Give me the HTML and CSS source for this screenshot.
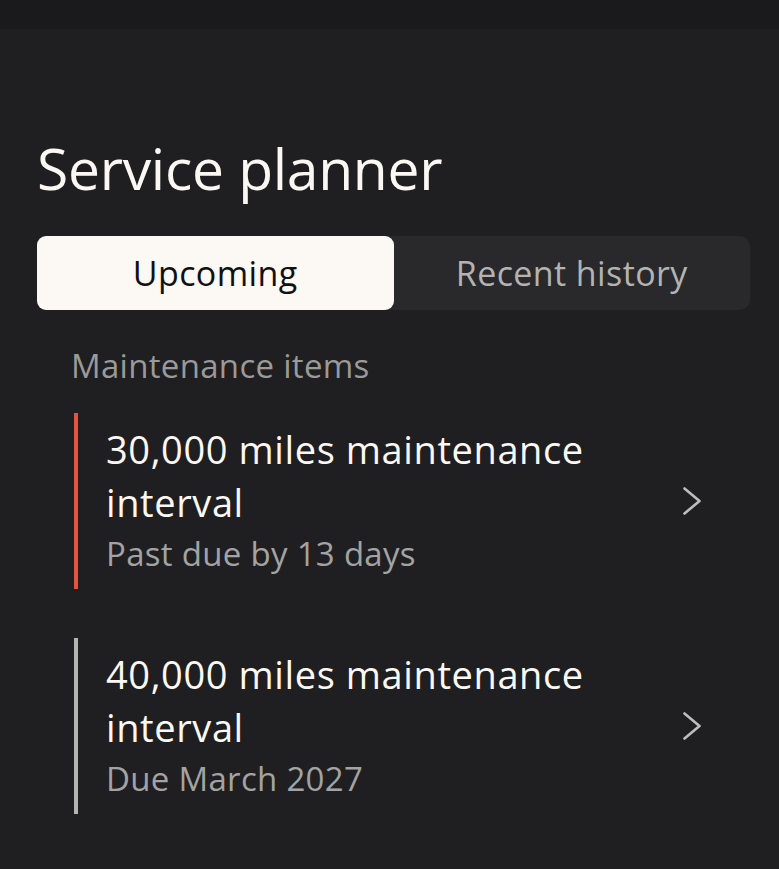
FILE: index.html
```html
<!DOCTYPE html>
<html lang="en">
<head>
<meta charset="utf-8">
<title>Service planner</title>
<link rel="stylesheet" href="styles.css">
</head>
<body>
<div class="statusbar"></div>
<main class="page">
  <h1 class="title">Service planner</h1>
  <div class="tabs">
    <div class="tab tab-active">Upcoming</div>
    <div class="tab">Recent history</div>
  </div>
  <section class="section">
    <h2 class="section-label">Maintenance items</h2>
    <div class="item item-overdue">
      <div class="item-text">
        <div class="item-title">30,000 miles maintenance interval</div>
        <div class="item-sub">Past due by 13 days</div>
      </div>
      <svg class="chev" viewBox="0 0 18 28" width="18" height="28"><path d="M1.5 1.5 L16.5 14 L1.5 26.5" fill="none" stroke="#bdbdbd" stroke-width="2.6" stroke-linecap="round" stroke-linejoin="round"/></svg>
    </div>
    <div class="item">
      <div class="item-text">
        <div class="item-title">40,000 miles maintenance interval</div>
        <div class="item-sub">Due March 2027</div>
      </div>
      <svg class="chev" viewBox="0 0 18 28" width="18" height="28"><path d="M1.5 1.5 L16.5 14 L1.5 26.5" fill="none" stroke="#bdbdbd" stroke-width="2.6" stroke-linecap="round" stroke-linejoin="round"/></svg>
    </div>
  </section>
</main>
</body>
</html>
```

FILE: styles.css
```css
* { box-sizing: border-box; }
html, body { margin: 0; padding: 0; }
body {
  background: #1f1f21;
  font-family: "Open Sans", "Noto Sans", sans-serif;
  color: #fbf8f4;
  width: 779px;
  height: 869px;
  overflow: hidden;
}
.statusbar {
  height: 29px;
  background: #1a1a1c;
}
.page {
  padding: 0 29px 0 37px;
}
.title {
  margin: 104px 0 0 0;
  font-size: 57px;
  font-weight: 500;
  line-height: 70px;
  letter-spacing: -0.3px;
}
.tabs {
  margin-top: 33px;
  display: flex;
  background: #29292b;
  border-radius: 10px;
  height: 74px;
}
.tab {
  flex: 1;
  display: flex;
  align-items: center;
  justify-content: center;
  font-size: 34px;
  letter-spacing: 0.4px;
  color: #b3b3b3;
  border-radius: 9px;
}
.tab-active {
  background: #fcf8f4;
  color: #111;
}
.section {
  padding-left: 34px;
}
.section-label {
  margin: 36px 0 0 0;
  font-size: 33px;
  font-weight: 400;
  line-height: 40px;
  letter-spacing: 0.3px;
  color: #9a9a9a;
}
.item {
  display: flex;
  align-items: center;
  margin-left: 3px;
  margin-right: 49px;
  border-left: 4px solid #b4b4b4;
  padding-left: 28px;
  min-height: 176px;
  margin-top: 49px;
}
.item-overdue {
  border-left-color: #e4533f;
  margin-top: 27px;
}
.item-text {
  flex: 1;
  max-width: 520px;
}
.item-title {
  font-size: 38px;
  line-height: 53px;
  letter-spacing: 0.6px;
  color: #fbf8f4;
}
.item-sub {
  font-size: 33px;
  line-height: 50px;
  letter-spacing: 0.3px;
  color: #a3a3a3;
}
.chev {
  margin-left: auto;
  flex: none;
}
```
